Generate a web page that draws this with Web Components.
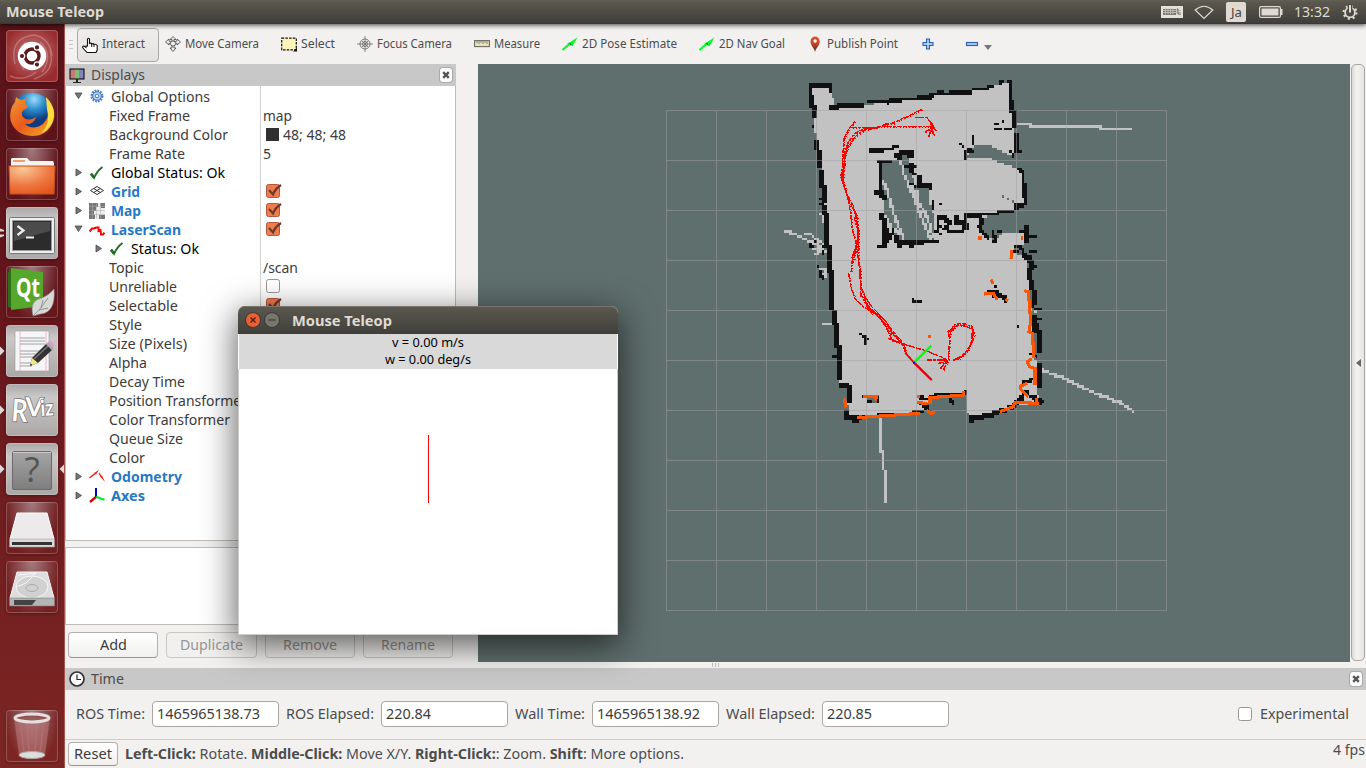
<!DOCTYPE html>
<html lang="en">
<head>
<meta charset="utf-8">
<title>Mouse Teleop</title>
<style>
html,body{margin:0;height:100%;overflow:hidden;background:#f2f1f0}
body{font-family:"Noto Sans","Open Sans",sans-serif;color:#3c3c3c;font-size:14px}
</style>
</head>
<body>
<rviz-desktop></rviz-desktop>
<script>
function define(name, markup, setup) {
  customElements.define(name, class extends HTMLElement {
    connectedCallback() {
      if (this.shadowRoot) return;
      const root = this.attachShadow({ mode: 'open' });
      root.innerHTML = typeof markup === 'function' ? markup(this) : markup;
      if (setup) setup(this, root);
    }
  });
}

/* A label squeezed or stretched to a fixed advance width. */
define('fit-text', '<style>:host{display:block;flex:none;white-space:nowrap}span{display:inline-block;transform-origin:0 50%}</style><span><slot></slot></span>', (el, root) => {
  const s = root.querySelector('span'), w = +el.getAttribute('w');
  el.style.width = w + 'px';
  const n = s.getBoundingClientRect().width;
  if (n) s.style.transform = 'scaleX(' + w / n + ')';
});

const ICON = {
  hand: '<path d="M5.5 9V2Q6.5 .6 7.5 2V6.500Q9 5.500 9.700 7Q11 6 12 7.500Q14 6.700 15.200 8.500V13L14 15.500H5L1 11Q0 9 2 9L4 10.500V9Z" fill="#fff" stroke="#111" stroke-width="1.1"/><path d="M9.700 7v3M12 7.500V10" stroke="#111"/>',
  move: '<g fill="#eee" stroke="#555" stroke-width=".9"><path d="M8 .5l3 3H9v2.500l3-1V3l3.500 3-3.500 3V7L9 9v3h2l-3 3.500L5 12h2V9L4 7v2L.5 6 4 3v2l3 1V3.500H5z"/><circle cx="8" cy="7.500" r="2.600"/></g>',
  select: '<rect x=".7" y="2.200" width="14.600" height="11.600" fill="#fbf3b8" stroke="#111" stroke-width="1.200" stroke-dasharray="2.500 1.200"/><path d="M16 11.500v4h-4z" fill="#111"/>',
  focus: '<g fill="none" stroke="#777"><circle cx="8" cy="8" r="5"/><circle cx="8" cy="8" r="2.500"/><path d="M8 0v16M0 8h16M5 5l6 6M11 5l-6 6" stroke-width=".9"/></g>',
  ruler: '<rect x=".6" y="4.600" width="14.800" height="6" fill="#ece4ae" stroke="#6b6b6b" stroke-width="1.100"/><path d="M3 5v2M5 5v3M7 5v2M9 5v3M11 5v2M13 5v3" stroke="#777" stroke-width=".8"/>',
  arrow: '<path d="M.5 14L8 7.500" stroke="#0f2" stroke-width="2.200"/><path d="M5 8L15.500 1.500L10.500 10L7.500 9.500z" fill="#0f2"/><path d="M7.500 6.800l1.500 2.200" stroke="#053"/>',
  pin: '<path d="M8 16C7.500 12 3.500 10 3.500 5.200A4.600 4.600 0 0 1 12.700 5.200C12.700 10 8.700 12 8 16z" fill="url(#pg)"/><circle cx="8.100" cy="5" r="1.700" fill="#fff"/><defs><linearGradient id="pg" x2="0" y2="1"><stop stop-color="#e8502f"/><stop offset=".5" stop-color="#c0432a"/><stop offset="1" stop-color="#4a2a12"/></linearGradient></defs>',
  plus: '<path d="M6.500 3h3v3.500H13v3H9.500V13h-3V9.500H3v-3h3.500z" fill="#a9c9f0" stroke="#2a5fae" stroke-width="1.100"/>',
  minus: '<rect x="2.500" y="6.500" width="11" height="3" fill="#a9c9f0" stroke="#2a5fae" stroke-width="1.100"/>',
  monitor: '<rect x=".5" y="1.500" width="15" height="11" fill="#000"/><path d="M1.500 2.500h4.500v9H1.500z" fill="#c97878"/><path d="M6 2.500h4v9H6z" fill="#78c07a"/><path d="M10 2.500h4.500v9H10z" fill="#8680bf"/><path d="M7 12h2v3h3v1H4v-1h3z" fill="#222"/>',
  gear: '<circle cx="8" cy="7" r="5.200" fill="none" stroke="#4a80c4" stroke-width="2.600" stroke-dasharray="1.700 1"/><circle cx="8" cy="7" r="4.300" fill="#bcd4f0" stroke="#4577b8"/><circle cx="8" cy="7" r="1.800" fill="#fff" stroke="#4577b8"/>',
  check: '<path d="M2 9.500L5 13Q8 6 13.500 2" fill="none" stroke="#1c701f" stroke-width="1.900"/><path d="M2 8.500l3 4" stroke="#1c701f" stroke-width="2.600"/>',
  grid: '<g fill="none" stroke="#333" stroke-width="1"><path d="M8 2.500L14.500 6.500L8 10.500L1.500 6.500zM4.800 4.500l6.500 4M11.200 4.500L4.800 8.500"/></g>',
  map: '<path d="M0 0h16v16H0z" fill="#eee"/><path d="M0 0h9v4H7v4H5v4h1v4H0zM11 0h5v5h-4zM10 12h6v4h-6z" fill="#777"/><path d="M3.500 0v16M7.500 0v16M11.500 0v16M0 3.500h16M0 7.500h16M0 11.500h16" stroke="#aaa" stroke-width=".5"/>',
  laser: '<path d="M.5 9.500L3 6.500H5L7 5.500H9.500V9l2-1 .5 4.500H14L15.500 10.500" fill="none" stroke="#f00" stroke-width="2"/>',
  odom: '<path d="M.5 9L6 4.500" stroke="#e21" stroke-width="1.600"/><path d="M5 4l5-3L7 5.500z" fill="#e21"/><path d="M10 4l2 3.500" stroke="#e21" stroke-width="1.400"/><path d="M10.800 7l2.200-.5L16 13z" fill="#e21"/>',
  axes: '<path d="M7 0v9" stroke="#00c" stroke-width="2"/><path d="M7 8.800L15.500 11.800" stroke="#0e2" stroke-width="2"/><path d="M7 8.800L1 14" stroke="#d00" stroke-width="2.400"/>',
  clock: '<circle cx="8" cy="8" r="7" fill="#fff" stroke="#333" stroke-width="1.700"/><path d="M8 3.500V8.500H12" fill="none" stroke="#222" stroke-width="1.200"/>'
};
define('ui-icon', el => `<style>:host{display:block;flex:none;width:16px;height:16px}svg{display:block}</style><svg width="16" height="16" viewBox="0 0 16 16">${ICON[el.getAttribute('name')]}</svg>`);

/* ---------- top panel ---------- */
define('top-panel', `<style>
:host{display:flex;align-items:center;height:24px;background:linear-gradient(#625f52 0,#5b5850 2px,#3f3e39 23px,#33322e);color:#dfdbd2;padding:0 8px 0 6px;box-shadow:0 1px 5px rgba(0,0,0,.75);position:relative;z-index:2}
.t{font-weight:700;font-size:14.500px;margin:-2px auto 0 0}svg{display:block;flex:none}
.ja{width:20px;height:20px;border-radius:2px;background:#dfdbd2;color:#44433e;font-size:13px;line-height:20px;display:flex;justify-content:center;margin:0 13px 0 12px}
.c{font-size:14.200px;margin:-2px 12px 0 11px}</style>
<fit-text class="t" w="98">Mouse Teleop</fit-text>
<svg width="22" height="14"><path d="M0 1h22v12H0z" fill="#e4e1da"/><path d="M2 4h13v6H2z" fill="#77756d"/><path d="M2 5.500h18M2 7.500h18M4.500 3.500v6M7 3.500v6M9.500 3.500v6M12 3.500v6M16 3.500v6" stroke="#bcb8ae"/><path d="M16 4h1v5h3" fill="none" stroke="#666"/></svg>
<svg width="20" height="15" style="margin-left:11px"><path d="M1.200 5Q10-2.500 18.800 5L10 13.500z" fill="none" stroke="#dfdbd2" stroke-width="1.200"/></svg>
<div class="ja"><fit-text w="11">Ja</fit-text></div>
<svg width="24" height="12"><rect x=".6" y=".6" width="20.800" height="10.800" rx="1.500" fill="none" stroke="#dfdbd2" stroke-width="1.200"/><path d="M2.500 2.500h17v7h-17zM22 3h1.500v6H22z" fill="#dfdbd2"/></svg>
<fit-text class="c" w="36">13:32</fit-text>
<svg width="16" height="16"><circle cx="8" cy="8.500" r="6.400" fill="none" stroke="#dfdbd2" stroke-width="2.200" stroke-dasharray="2 3.030"/><circle cx="8" cy="8.500" r="4.900" fill="none" stroke="#dfdbd2" stroke-width="1.800"/><path d="M8 0v8" stroke="#4a4943" stroke-width="4.500"/><path d="M8 1v7.500" stroke="#dfdbd2" stroke-width="2"/></svg>`);

/* ---------- launcher ---------- */
const APP = {
  dash: '<g fill="none" stroke="#e0a6a6" stroke-opacity=".45" stroke-width="1.400"><path d="M9 34Q3 8 28 5M44 20Q50 42 28 49M18 40Q8 22 20 12M34 12Q48 25 36 42M4 46Q18 52 30 42M28 5Q44 8 46 26"/></g><circle cx="26" cy="26" r="14.200" fill="#fff"/><circle cx="26" cy="26" r="7" fill="none" stroke="#5c1a1d" stroke-width="3.400"/><g fill="#5c1a1d" stroke="#fff" stroke-width="1.200"><circle cx="16" cy="26" r="2.700"/><circle cx="31" cy="17.400" r="2.700"/><circle cx="31" cy="34.600" r="2.700"/></g>',
  firefox: '<defs><radialGradient id="fb" cx=".55" cy=".15"><stop stop-color="#9fdcf8"/><stop offset=".5" stop-color="#2a8ed0"/><stop offset="1" stop-color="#123a7e"/></radialGradient><linearGradient id="fo" y2="1" x2="1" x1="0" y1="0"><stop stop-color="#f29a35"/><stop offset=".5" stop-color="#e9591c"/><stop offset="1" stop-color="#f6b72b"/></linearGradient></defs><circle cx="26" cy="25" r="21" fill="url(#fb)"/><path d="M44 14Q51 23 47 33Q41 47 26 47Q9 46 4.500 31Q3 20 9 13L10 8Q13 11 16 11L21 9L19 13L22 18L18 21Q14 23 17 28Q22 33 30 28Q28 36 19 35Q27 42 37 35Q44 28 41 19L45 22Q46 17 44 14z" fill="url(#fo)"/><path d="M40 8Q52 20 46 34Q42 41 36 44Q45 33 41 20z" fill="#fbdc42"/>',
  files: '<path d="M5 11l1-1h15l3 3h23l1 2v10H5z" fill="#f7f3ee"/><path d="M7 12h12v2H7z" fill="#f0a070"/><path d="M3 18h46l-1 28H4z" fill="url(#ff)" stroke="#c5521c"/><defs><radialGradient id="ff" cx=".3" cy=".1" r="1"><stop stop-color="#f9c898"/><stop offset=".6" stop-color="#ee7740"/><stop offset="1" stop-color="#e2571c"/></radialGradient></defs>',
  term: '<rect x="3.500" y="10.500" width="45" height="36" rx="1" fill="#efefef" stroke="#777"/><rect x="6.500" y="13.500" width="39" height="30" fill="#2b2c2b" stroke="#999"/><path d="M8 15h36v9L8 34z" fill="#4a4b4a"/><path d="M11.500 19l6 4.500-6 4.500" fill="none" stroke="#eee" stroke-width="2.200"/><path d="M20 30.500h8" stroke="#eee" stroke-width="2"/>',
  qt: '<path d="M2 7L5 2L5 42L2 41z" fill="#2d6d18"/><path d="M5 2L37 6V40L5 44z" fill="#56a82c"/><text x="10" y="31" font-family="Open Sans" font-weight="700" font-size="27" fill="#fff" textLength="24" lengthAdjust="spacingAndGlyphs">Qt</text><path d="M48 23Q50 47 34 48L27 50Q23 34 36 32Q43 29 48 23z" fill="#d8d8d6" stroke="#888" stroke-width=".6"/><path d="M27 50Q35 43 42 32M35 42l2-8M33 44l9-2" fill="none" stroke="#777" stroke-width=".7"/>',
  edit: '<rect x="9" y="6" width="34" height="40" fill="#f5f6f8" stroke="#999" stroke-width=".6"/><path d="M14 13h25M14 16h25M14 19h25M14 26h25M14 29h25M14 32h16M14 38h14M14 41h12" stroke="#a0a0a0" stroke-width="1"/><path d="M14 6v40M40 6v40" stroke="#eea0b0" stroke-width=".7"/><path d="M24 41L26 33L40 19L46 25L32 38z" fill="#333"/><path d="M28 34L42 21" stroke="#777" stroke-width="1.500"/><path d="M24 41L26 33L32 38z" fill="#f4e98a"/><path d="M24 41l.8-2.500 1.600 1.500z" fill="#222"/><path d="M40 19l2-2 6 6-2 2z" fill="#aaa"/><path d="M42 17l1.500-1q2-.5 4.500 4l-.5 3z" fill="#e89ad0"/>',
  rviz: '<g font-family="Lato" font-weight="700" fill="#fff" stroke="#777" stroke-width="1.600" paint-order="stroke"><text transform="translate(5 37) rotate(4)" font-size="31" textLength="16" lengthAdjust="spacingAndGlyphs">R</text><text transform="translate(19 32) rotate(2)" font-size="26" textLength="18" lengthAdjust="spacingAndGlyphs">V</text><text transform="translate(35 32) rotate(-4)" font-size="22" textLength="13" lengthAdjust="spacingAndGlyphs">iz</text></g>',
  unknown: '<rect x="6.500" y="8.500" width="39" height="38" rx="1.500" fill="url(#ug)" stroke="#6a6a6a"/><path d="M7 9.500h38" stroke="#ccc"/><text x="26" y="39" text-anchor="middle" font-family="Open Sans" font-size="35" fill="#555">?</text><defs><linearGradient id="ug" x2="0" y2="1"><stop stop-color="#a6a5a5"/><stop offset="1" stop-color="#7f7e7e"/></linearGradient></defs>',
  drive: '<path d="M11 11h30l7 26H4z" fill="#eceaea" stroke="#fff"/><path d="M3.500 37h45v8h-45z" fill="#dcdada" stroke="#999" stroke-width=".6"/><path d="M6 40h40v3H6z" fill="#333"/>',
  disk: '<path d="M11 11h30l7 26H4z" fill="#dedddd" stroke="#f5f5f5"/><ellipse cx="26" cy="26" rx="16" ry="11" fill="#d2d1d1" stroke="#f7f7f7"/><ellipse cx="26" cy="27" rx="6" ry="3.500" fill="none" stroke="#aaa"/><path d="M12 14L30 12 20 22 10 26" fill="none" stroke="#f7f7f7"/><path d="M3.500 37h45v8h-45z" fill="#b5b4b4" stroke="#777" stroke-width=".6"/><path d="M8 39h22l-4 5H8z" fill="#444"/>',
  trash: '<path d="M8 8L13 45Q26 51 39 45L44 8z" fill="#c98a8c" fill-opacity=".45"/><path d="M14 12l4 30M21 12l2 30M31 12l-2 30M38 12l-4 30" stroke="#bb7777" stroke-opacity=".6" stroke-width="1.300"/><ellipse cx="26" cy="8" rx="17" ry="4" fill="#8a4a4a" fill-opacity=".6" stroke="#e4e0e0" stroke-width="3"/><ellipse cx="26" cy="45" rx="13" ry="3.500" fill="#ddd" stroke="#aaa"/>'
};
define('launcher-tile', el => {
  const a = el.getAttribute('app');
  return `<style>:host{display:grid;width:52px;height:52px;flex:none;position:relative;border-radius:4px;background:${el.hasAttribute('run') ? 'linear-gradient(#aaa6a7,#cbc8c8 25%,#aca7a7)' : a === 'dash' ? 'radial-gradient(circle at 50% 45%,#c47778,#982c2f 75%)' : 'radial-gradient(ellipse at 50% 0,#a37a7e,transparent 75%)'};box-shadow:inset 0 0 0 1px rgba(255,255,255,.22),0 1px 3px rgba(0,0,0,.3)}
  svg{grid-area:1/1}.m{position:absolute;left:-6px;top:0;overflow:visible}.r{position:absolute;left:53px;top:0}</style><svg width="52" height="52">${APP[a]}</svg>
  ${el.hasAttribute('run') ? `<svg class="m" width="6" height="52"><path d="${a === 'term' ? 'M0 21.500l4 1.500v1.500H0zM0 27.500h4v1.500l-4 1.500z' : 'M0 21.500l4.500 4.500-4.500 4.500z'}" fill="#dcd9d9"/></svg>` : ''}
  ${a === 'unknown' ? '<svg class="r" width="5" height="52"><path d="M5 21.500L.5 26l4.500 4.500z" fill="#dcd9d9"/></svg>' : ''}`;
});
define('app-launcher', `<style>:host{display:flex;flex-direction:column;gap:7px;padding:6px 6px 6px;width:52px;background:linear-gradient(#5a1219,#64151b 35%,#742021 75%,#7c2624);border-right:1px solid #a65450}launcher-tile:last-child{margin-top:auto}</style>
${['dash', 'firefox', 'files', 'term!', 'qt', 'edit!', 'rviz!', 'unknown!', 'drive', 'disk', 'trash'].map(n => `<launcher-tile app="${n.replace('!', '')}"${n.endsWith('!') ? ' run' : ''}></launcher-tile>`).join('')}`);

/* ---------- toolbar ---------- */
define('tool-bar', `<style>:host{display:flex;align-items:center;height:40px;gap:22px;font-size:12.400px;color:#4c4c4c;padding-left:4px;box-sizing:border-box}
.i{display:flex;align-items:center;gap:4px;flex:none}.i fit-text{margin-top:-2px}.on{box-sizing:border-box;width:82px;height:34px;border:1px solid #aaa7a3;border-radius:4px;background:linear-gradient(#efeeec,#e4e2e0);padding-left:4px;margin:1px -16px 0 -18px}
.h{width:4px;height:9px;flex:none;background:repeating-linear-gradient(#c9c6c3 0 1px,transparent 1px 4px)}.d{width:0;height:0;border:4px solid transparent;border-top:5px solid #777;margin:10px 0 0 -18px}.p{margin-right:6px}</style>
<div class="h"></div>
<div class="i on"><ui-icon name="hand"></ui-icon><fit-text w="43">Interact</fit-text></div>
${[['move', 74, 'Move Camera'], ['select', 34, 'Select'], ['focus', 75, 'Focus Camera'], ['ruler', 46, 'Measure'], ['arrow', 95, '2D Pose Estimate'], ['arrow', 66, '2D Nav Goal'], ['pin', 71, 'Publish Point']].map(t => `<div class="i"><ui-icon name="${t[0]}"></ui-icon><fit-text w="${t[1]}">${t[2]}</fit-text></div>`).join('')}
<ui-icon class="p" name="plus"></ui-icon><ui-icon name="minus"></ui-icon><div class="d"></div>`);

/* ---------- dock title ---------- */
define('dock-title', el => `<style>:host{display:flex;align-items:center;height:22px;background:#c8c8c8;color:#4c4c4c;padding:0 4px;font-size:14.200px;flex:none}.x{margin-left:auto;width:12px;height:14px;background:#fbfbfb;border-radius:3px;box-shadow:0 0 0 1px #aaa;display:grid;place-items:center}fit-text{margin:-2px 0 0 6px}</style>
<ui-icon name="${el.getAttribute('icon')}"></ui-icon><fit-text w="${el.getAttribute('w')}">${el.getAttribute('label')}</fit-text><div class="x"><svg width="8" height="8"><path d="M1.200 1.200l5.600 5.600M6.800 1.200L1.200 6.800" stroke="#555" stroke-width="2.400"/></svg></div>`);

/* ---------- display tree ---------- */
define('check-box', el => `<style>:host{display:block;flex:none;width:17px;height:16px}svg{display:block}</style><svg width="17" height="16"><rect x="1.500" y="1.500" width="13" height="13" rx="2" fill="${el.hasAttribute('on') ? '#f07c4e' : '#fff'}" stroke="${el.hasAttribute('on') ? '#b5573a' : '#999691'}"/>${el.hasAttribute('on') ? '<path d="M4 7l4 4.500Q10 6 16 2" fill="none" stroke="#6b3a2c" stroke-width="2.200"/>' : ''}</svg>`);
/* level, marker, icon, label, label width, value markup, style */
const ROWS = [
  [0, 'v', 'gear', 'Global Options', 99, ''],
  [1, '', '', 'Fixed Frame', 81, '<fit-text w="29">map</fit-text>'],
  [1, '', '', 'Background Color', 119, '<i></i><fit-text w="63">48; 48; 48</fit-text>'],
  [1, '', '', 'Frame Rate', 76, '<fit-text w="8">5</fit-text>'],
  [0, '>', 'check', 'Global Status: Ok', 114, '', 'k'],
  [0, '>', 'grid', 'Grid', 29, '<check-box on></check-box>', 'b'],
  [0, '>', 'map', 'Map', 30, '<check-box on></check-box>', 'b'],
  [0, 'v', 'laser', 'LaserScan', 70, '<check-box on></check-box>', 'b'],
  [1, '>', 'check', 'Status: Ok', 68, '', 'k'],
  [1, '', '', 'Topic', 35, '<fit-text w="35">/scan</fit-text>'],
  [1, '', '', 'Unreliable', 68, '<check-box></check-box>'],
  [1, '', '', 'Selectable', 69, '<check-box on></check-box>'],
  [1, '', '', 'Style', 33, ''], [1, '', '', 'Size (Pixels)', 78, ''], [1, '', '', 'Alpha', 38, ''],
  [1, '', '', 'Decay Time', 76, ''], [1, '', '', 'Position Transformer', 138, ''], [1, '', '', 'Color Transformer', 121, ''],
  [1, '', '', 'Queue Size', 74, ''], [1, '', '', 'Color', 36, ''],
  [0, '>', 'odom', 'Odometry', 71, '', 'b'], [0, '>', 'axes', 'Axes', 34, '', 'b']];
define('display-tree', `<style>:host{display:block;background:#fff;border:1px solid #bfbcb8;border-top:0;padding-top:1px;font-size:14.200px;flex:none;height:453px;background-image:linear-gradient(#d4d2d0,#d4d2d0);background-size:1px 100%;background-position:194px 0;background-repeat:no-repeat}
.r{display:grid;grid-template-columns:194px 1fr;height:19px;align-items:center}.n,.c{display:flex;align-items:center;height:19px}
.n{padding-left:8px}.s{padding-left:28px}.p{padding-left:43px}.a{width:9px;margin-right:6px}.n ui-icon{margin-right:6px;margin-left:0}
.k{color:#000}.b{color:#2878c8;font-weight:700}.c{padding-left:3px}.c check-box{margin:-2px 0 0 2px}i{width:13px;height:13px;background:#303030;margin:0 4px 0 3px}svg{display:block}</style>
${ROWS.map(r => `<div class="r"><div class="n ${r[0] && r[1] ? 's' : r[0] ? 'p' : ''} ${r[6] || ''}">${r[1] ? `<svg class="a" width="9" height="9"><path d="${r[1] === 'v' ? 'M1 1h7l-3.500 5.500z' : 'M2 1v7l5.500-3.500z'}" fill="#777" stroke="#444" stroke-width=".8"/></svg>` : ''}${r[2] ? `<ui-icon name="${r[2]}"></ui-icon>` : ''}<fit-text w="${r[4]}">${r[3]}</fit-text></div><div class="c">${r[5]}</div></div>`).join('')}`);

define('push-button', el => `<style>:host{box-sizing:border-box;display:flex;align-items:center;justify-content:center;flex:none;height:26px;border:1px solid #b3b0ac;border-bottom-color:#989591;border-radius:4px;background:linear-gradient(#fff,#f1f0ef);color:#3c3c3c;font-size:14.200px}:host([off]){color:#979593;border-color:#c9c6c3;background:#f1f0ee}fit-text{margin-top:-2px}</style><fit-text w="${el.getAttribute('w')}">${el.getAttribute('label')}</fit-text>`);

define('displays-dock', `<style>:host{display:flex;flex-direction:column;width:391px;flex:none}
.d{box-sizing:border-box;height:78px;margin:6px 0 0;border:1px solid #bfbcb8;background:#fff;flex:none}.b{display:flex;gap:8px;padding:7px 3px 0}push-button{width:90px}.w{width:91px}</style>
<dock-title icon="monitor" label="Displays" w="54"></dock-title><display-tree></display-tree><div class="d"></div>
<div class="b"><push-button label="Add" w="27"></push-button><push-button class="w" off label="Duplicate" w="63"></push-button><push-button off label="Remove" w="54"></push-button><push-button off label="Rename" w="54"></push-button></div>`);

/* ---------- 3D view: occupancy grid, laser hits, odometry ----------
   Survey units are thirds of a pixel from (780,70); one map cell is 7.5 units. */
const FREE = [
  [93,52,150,48,155,70,162,95,165,110,300,100,410,85,540,66,640,45,690,38,697,90,703,180,700,262,625,222,585,222,560,262,630,262,640,272,700,290,720,292,727,320,733,372,733,400,712,415,612,440,605,490,640,512,660,492,690,488,735,490,735,525,700,535,705,550,742,560,745,640,752,730,760,830,770,900,768,960,782,1000,745,1005,700,1005,580,1045,562,1030,560,975,450,978,430,1025,205,1040,200,945,180,935,172,810,160,700,148,590,142,480,137,430,130,370,118,270,105,180]];
const UNKNOWN = [[303,278,345,270,358,255,388,258,390,300,405,345,450,350,447,395,462,440,462,510,350,510,335,460,310,430,305,320],[262,983,288,983,288,998,262,998],[662,375,672,375,672,380,662,380],[680,385,686,385,686,390,680,390],[695,390,702,390,702,397,695,397]];
const RAYS = [[308,330,322,365,340,430,360,480,370,508],[362,275,370,310,395,365,420,430,440,480,450,508],[400,350,410,395,430,420,445,450,458,500],[410,365,414,395],[318,455,328,480],[348,478,355,500],
 [18,483,60,500,100,520,140,545],[75,490,95,495,115,512,135,525],[95,535,135,543],[105,520,130,535],[105,550,125,540],[110,590,135,600],[120,602,135,615],[125,762,160,762],[124,432,126,455],
 [708,161,752,161],[752,168,957,168],[957,176,1050,176],[777,897,800,905,840,920,880,938,930,962,980,982,1020,998,1040,1010,1059,1023],[300,1045,302,1120,307,1170,312,1200,314,1290],[752,500,765,500],[755,590,765,590],[765,722,768,726]];
const WALLS = [
 '1 87 48 120 48 150 45 150 62','1 90 42 148 40','1 87 50 88 88','2 93 80 96 140','1 96 165 96 170','2 102 210 109 235','2 112 245 114 285','2 119 300 121 345','2 125 350 129 395','2 128 410 135 450 135 500 142 550 142 600','1 120 388 125 388','1 122 400 130 405',
 '2 147 600 150 690 156 730','2 160 735 164 790','2 166 800 172 850 172 880','2 170 885 175 925','2 183 940 205 942','2 202 950 203 990','2 193 1020 197 1035 230 1045','1 210 1040 240 1043 300 1034 345 1032 430 1025','1 155 855 163 857',
 '2 150 106 195 104','2 180 100 250 99','1 262 95 320 97','2 325 90 360 88','1 365 84 405 88','2 415 80 460 74','1 450 70 500 72','1 470 63 485 67','2 510 65 570 60','1 575 57 620 56','1 620 48 640 48','1 660 38 670 34','1 680 34 690 40',
 '1 688 35 688 60 692 90','2 692 95 695 130 697 165','2 705 190 708 240','1 716 220 717 240','1 694 245 698 258',
 '1 642 177 657 177','1 672 177 690 177','1 665 153 670 153','1 648 162 656 162','1 575 198 575 222','2 562 236 567 245','1 555 245 553 266','1 540 221 546 228',
 '2 268 235 306 235','1 283 233 312 236 355 230','2 360 242 400 240','2 345 252 352 265','1 290 275 330 275','1 298 275 299 320 298 370','2 283 362 305 362','2 303 370 306 385','1 385 258 395 262','2 388 280 390 300','1 373 290 405 292','1 400 300 402 310','2 410 322 412 342 450 345','1 393 342 415 348',
 '2 301 430 306 455 305 490 308 528','1 290 528 298 528','1 315 465 325 485 320 500','1 338 475 342 495','1 330 490 325 515','2 343 500 350 518 385 516 430 512','1 430 512 472 514','1 388 525 400 525','1 455 393 460 415','1 478 402 480 402',
 '2 470 435 490 440','2 555 435 600 433','1 605 434 630 434','1 635 432 660 426 715 418','2 706 405 725 402','1 731 372 734 398','1 724 297 728 345 729 372','1 731 315 733 370','1 715 293 722 296',
 '1 475 440 472 460 478 470 465 485 480 488','2 493 440 510 455','1 505 462 490 475 510 482','2 522 440 525 450 550 455 556 478','1 518 482 545 482 548 470','1 600 445 602 480 608 490','1 605 445 605 460 595 470','2 612 490 620 495','1 640 480 643 510 635 512','1 655 480 658 487',
 '2 732 465 736 515','1 723 480 730 485','1 753 498 755 498','1 765 495 767 500','1 705 530 720 530 728 540','1 700 540 715 545','2 730 552 748 560','1 750 540 765 545','2 745 570 752 580 744 600 747 630','1 762 588 767 590','2 750 630 756 670 758 700','1 765 670 767 690','2 755 740 762 785','1 755 710 777 718','1 762 745 777 748','2 765 760 771 790 773 845','1 752 850 765 860','2 770 882 775 950','1 725 938 745 935 755 925','2 715 985 740 960','2 760 980 780 990','1 775 1000 785 990','2 705 1000 720 985',
 '1 570 1035 575 1055 585 1048','2 578 1042 625 1032 655 1020 700 1005','2 700 1000 730 980','1 740 970 748 975',
 '2 420 975 430 980','2 422 1000 440 1020','1 435 985 450 990','1 450 980 475 973 550 970','2 553 960 558 965','1 512 985 516 1000','1 250 978 290 980 290 990','1 265 995 272 995',
 '2 395 688 397 688','1 400 692 420 693','1 240 793 252 800 262 806','1 252 810 254 822','1 712 769 714 769','2 620 662 652 665','2 640 672 665 675 675 683','1 645 648 646 648',
 '1 92 524 95 530','1 105 512 107 516','1 125 545 130 552','1 130 525 132 530','1 112 590 115 590','1 122 607 125 625'];
const ODOM = [
 '425 118 385 138 340 158 290 173 255 180 225 200 205 230 195 260 190 300 185 320 200 370 220 410 230 450 236 490 228 530 222 570',
 '455 170 300 170 250 178 225 190 205 215 195 245 192 290 188 335 205 390 232 440 235 500',
 '225 155 205 180 192 205 189 250 188 290 182 320 195 355 205 390 212 430 218 490','215 172 290 174','405 142 440 142 455 160 462 172','435 187 455 172','445 200 458 170','460 195 457 168','467 182 450 160','310 163 345 160',
 '236 480 229 530 238 590 242 650 255 680 275 710 315 750 335 780 365 815 375 845 402 878','218 480 229 525 218 560 213 608','228 530 215 565','222 440 236 490 236 570',
 '206 610 212 650 225 685 250 710 290 735 320 765 345 800 370 825','240 600 242 680','240 670 275 732','250 680 270 715 320 755','260 708 300 745 330 790 350 800','310 755 335 808 370 825','325 805 380 825 440 843 500 868','335 812 375 822',
 '440 870 505 870','505 870 508 820 512 780 525 763 550 760 575 770 580 795 570 830 545 858 515 872','515 782 528 768 548 766 572 775','575 765 583 795','500 785 515 778','480 895 505 872','490 900 503 875','475 880 500 875','575 790 577 810 565 840 540 865 520 870','370 820 378 845','505 780 507 800'];
const SCAN = ['230 1043 300 1038 420 1030','248 980 290 980 286 992','194 985 196 1005 200 1012','410 998 440 1000','415 975 416 985','450 1002 450 983 550 975 550 962','440 1022 455 1030 465 1027','444 799 454 800','595 504 606 504','722 504 728 504','694 540 695 550 693 567','633 628 640 642','612 672 640 670 652 690','676 688 684 692','733 662 744 665 748 700 752 755 747 785 757 790 762 865','755 866 742 875 748 890 765 895 765 945','742 940 722 948 722 958 745 980','768 985 772 1000 705 997 700 1010 660 1025','745 998 750 996'];

function gridPaths() {
  const S = 7.5, cells = new Map(), key = (c, r) => c + ',' + r;
  const col = x => Math.floor((x - 87) / S), row = y => Math.floor((y - 30) / S);
  const fill = (p, v) => {
    for (let r = -2; r < 175; r++) {
      const y = 30 + (r + .5) * S, xs = [];
      for (let i = 0; i < p.length; i += 2) {
        const j = (i + 2) % p.length, y1 = p[i + 1], y2 = p[j + 1];
        if ((y1 > y) !== (y2 > y)) xs.push(p[i] + (y - y1) / (y2 - y1) * (p[j] - p[i]));
      }
      xs.sort((a, b) => a - b);
      for (let i = 0; i + 1 < xs.length; i += 2)
        for (let c = col(xs[i] + S / 2); c <= col(xs[i + 1] - S / 2); c++) v ? cells.set(key(c, r), v) : cells.delete(key(c, r));
    }
  };
  const line = (p, v, t) => {
    for (let i = 0; i + 3 < p.length; i += 2) {
      const n = Math.max(1, Math.ceil(Math.hypot(p[i + 2] - p[i], p[i + 3] - p[i + 1]) / 3));
      const steep = Math.abs(p[i + 3] - p[i + 1]) > Math.abs(p[i + 2] - p[i]);
      for (let k = 0; k <= n; k++) {
        const c = col(p[i] + (p[i + 2] - p[i]) * k / n), r = row(p[i + 1] + (p[i + 3] - p[i + 1]) * k / n);
        for (let q = 0; q < t; q++) cells.set(key(c + (steep ? q : 0), r + (steep ? 0 : q)), v);
      }
    }
  };
  FREE.forEach(p => fill(p, 1));
  UNKNOWN.forEach(p => fill(p, 0));
  RAYS.forEach(p => line(p, 1, 1));
  WALLS.forEach(s => { const p = s.split(' ').map(Number); line(p.slice(1), 2, p[0]); });
  const out = ['', '', ''];
  for (const [k, v] of cells) { const [c, r] = k.split(',').map(Number); out[v] += `M${809 + c * 2.5} ${80 + r * 2.5}h2.500v2.500h-2.500z`; }
  return out;
}
define('render-view', () => {
  const g = gridPaths(), pl = (a, extra) => a.map(s => `<polyline points="${s}" ${extra}/>`).join('');
  let lines = '';
  for (let i = 0; i <= 10; i++) lines += `M${666.5 + i * 50} 110V610M666 ${110.5 + i * 50}H1167`;
  return `<style>:host{display:block;width:872px;height:598px;background:#5f6f6d;flex:none}svg{display:block}</style>
<svg width="872" height="598" viewBox="478 64 872 598" shape-rendering="crispEdges" fill="none">
<path d="${g[1]}" fill="#c2c2c2"/><path d="${g[2]}" fill="#111"/>
<path d="${lines}" stroke="#a0a0a4" stroke-opacity=".5"/>
<g transform="translate(780 70) scale(.33333)">${pl(ODOM, 'stroke="#f00" stroke-width="4" stroke-dasharray="17 2 8 3 12 2"')}
<g transform="translate(3 2)">${pl(ODOM, 'stroke="#f00" stroke-width="3" stroke-dasharray="4 7 3 5"')}</g>
${pl(SCAN, 'stroke="#ff5500" stroke-width="9.500"')}
<g shape-rendering="auto"><path d="M375 848L402 878L455 930" stroke="#f00000" stroke-width="5"/><path d="M402 878L455 930" stroke="#e8000c" stroke-width="7"/><path d="M402 878L454 827" stroke="#0f0" stroke-width="7"/><path d="M399 875h6v6h-6z" fill="#00f"/></g></g></svg>`;
});
define('view-handle', `<style>:host{display:flex;align-items:center;justify-content:center;box-sizing:border-box;width:14px;height:597px;margin:0 1px;border:1px solid #aaa7a3;border-radius:5px;background:linear-gradient(90deg,#dcdad8,#f4f3f2 40%,#e6e4e2)}i{border:4px solid transparent;border-right:5px solid #666;border-left:0}</style><i></i>`);

/* ---------- bottom docks ---------- */
define('time-field', el => `<style>:host{display:flex;align-items:center;gap:7px;flex:none;font-size:14.200px;color:#4c4c4c}fit-text{margin-top:-2px}.v{box-sizing:border-box;width:127px;height:26px;border:1px solid #aaa7a3;border-radius:4px;background:#fff;color:#3c3c3c;display:flex;align-items:center;padding-left:4px}</style>
<fit-text w="${el.getAttribute('lw')}">${el.getAttribute('label')}</fit-text><div class="v"><fit-text w="${el.getAttribute('vw')}">${el.getAttribute('value')}</fit-text></div>`);
define('time-dock', `<style>:host{display:block;height:71px;border-bottom:1px solid #d0cecb}.r{display:flex;align-items:center;height:48px;padding:0 17px 0 11px;gap:7px;font-size:14.200px;color:#4c4c4c}check-box{margin-left:auto;width:16px}.r>fit-text{margin-top:-2px}</style>
<dock-title icon="clock" label="Time" w="33"></dock-title><div class="r">
<time-field label="ROS Time:" lw="69" value="1465965138.73" vw="103"></time-field>
<time-field label="ROS Elapsed:" lw="88" value="220.84" vw="45"></time-field>
<time-field label="Wall Time:" lw="70" value="1465965138.92" vw="103"></time-field>
<time-field label="Wall Elapsed:" lw="89" value="220.85" vw="45"></time-field>
<check-box></check-box><fit-text w="89">Experimental</fit-text></div>`);
define('status-line', `<style>:host{display:flex;height:28px;align-items:center;padding:0 1px 0 3px;font-size:14.200px;color:#4c4c4c}push-button{width:50px;height:24px;margin-right:7px}fit-text{margin-top:-2px}.f{margin:-9px 0 0 auto}</style>
<push-button label="Reset" w="38"></push-button><fit-text w="559"><b>Left-Click:</b> Rotate. <b>Middle-Click:</b> Move X/Y. <b>Right-Click:</b>: Zoom. <b>Shift</b>: More options.</fit-text><fit-text class="f" w="32">4 fps</fit-text>`);

/* ---------- floating teleop window ---------- */
define('teleop-window', `<style>:host{display:flex;flex-direction:column;box-sizing:border-box;width:380px;height:329px;border-radius:7px 7px 0 0;box-shadow:0 9px 34px 2px rgba(0,0,0,.62);background:#fff}
.b{height:28px;display:flex;align-items:center;background:linear-gradient(#5b5950,#403f3a);box-shadow:inset 0 1px #77746a;border-radius:7px 7px 0 0;color:#dfdbd2;font-weight:700;font-size:14.500px;padding:0 7px}
.b svg{margin-right:3px}.b fit-text{margin-left:9px}
.g{height:35px;background:#d9d9d9;color:#000;font-size:12.200px;line-height:17px;display:flex;flex-direction:column;align-items:center;margin:0 1px}
.c{flex:1;border:1px solid #cfcdca;border-top:0;display:flex;justify-content:center}.l{width:1px;height:68px;background:#f00;margin:66px 0 0 1px}</style>
<div class="b"><svg width="16" height="16"><circle cx="8" cy="8" r="7.500" fill="#ea5f33" stroke="#393834"/><path d="M5.500 5.500l5 5M10.500 5.500l-5 5" stroke="#4a2014" stroke-width="1.300"/></svg><svg width="16" height="16"><circle cx="8" cy="8" r="7.500" fill="#77756d" stroke="#393834"/><path d="M4.500 8h7" stroke="#393834" stroke-width="1.200"/></svg><fit-text w="100">Mouse Teleop</fit-text></div>
<div class="g"><fit-text w="72">v = 0.00 m/s</fit-text><fit-text w="86">w = 0.00 deg/s</fit-text></div><div class="c"><div class="l"></div></div>`);

define('rviz-desktop', `<style>:host{display:grid;grid-template:24px 744px/65px 1301px;width:1366px;height:768px;position:relative;overflow:hidden}
top-panel{grid-column:1/3}.m{display:flex;flex-direction:column;background:#f2f1f0;min-width:0}.v{display:flex;height:598px}.gap{width:22px;flex:none}
.s{height:6px;display:flex;justify-content:center;align-items:center}.s i{width:7px;height:4px;background:repeating-linear-gradient(90deg,#bbb 0 1px,transparent 1px 3px)}
teleop-window{position:absolute;left:238px;top:306px;z-index:1}</style>
<top-panel></top-panel><app-launcher></app-launcher>
<div class="m"><tool-bar></tool-bar><div class="v"><displays-dock></displays-dock><div class="gap"></div><render-view></render-view><view-handle></view-handle></div>
<div class="s"><i></i></div><time-dock></time-dock><status-line></status-line></div><teleop-window></teleop-window>`);
</script>
</body>
</html>
